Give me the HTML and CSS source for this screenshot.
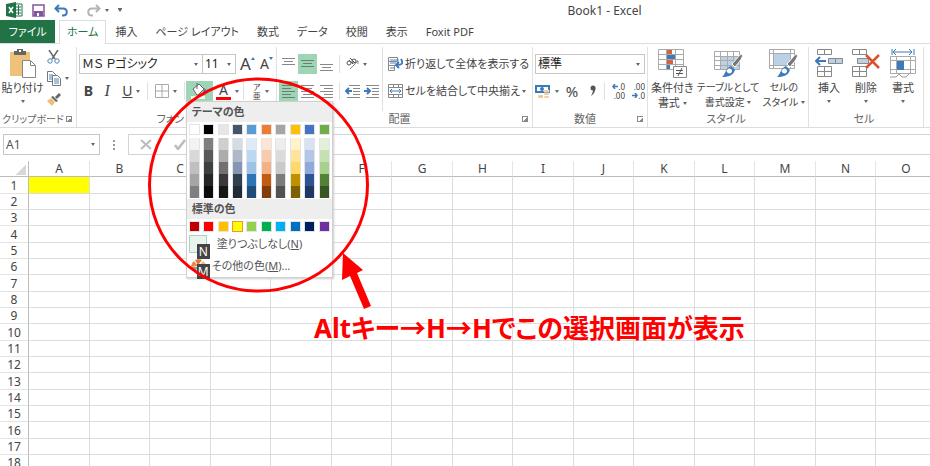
FILE: index.html
```html
<!DOCTYPE html>
<html lang="ja">
<head>
    <meta charset="UTF-8">
    <meta name="viewport" content="width=device-width, initial-scale=1.0">
    <title>Book1 - Excel</title>
    <link rel="stylesheet" href="styles.css">
    <script src="script.js" defer></script>
</head>
<body>
    <header class="titlebar">
        <div class="quick">
            <svg class="logo" width="17" height="16" viewBox="0 0 17 16">
                <path d="M9 2h7v12H9z" fill="#fff" stroke="#217346"/>
                <path d="M10 5h5M10 8h5M10 11h5M12.500 3v10" stroke="#217346"/>
                <path d="M0 2l10-2v16L0 14z" fill="#217346"/>
                <path d="M3 5l4 6M7 5l-4 6" stroke="#fff" stroke-width="1.500"/>
            </svg>
            <button aria-label="保存"><svg width="13" height="13" viewBox="0 0 13 13"><path d="M1 1h11v11H1z" fill="#fff" stroke="#8056a0" stroke-width="1.500"/><path d="M2 7h9v5H2z" fill="#8056a0"/><path d="M5 9h2v3H5z" fill="#fff"/></svg></button>
            <button class="drop" aria-label="元に戻す"><svg width="15" height="13" viewBox="0 0 15 13"><path d="M5 1L1.500 4.500L5 8M2 4.500h7c5 0 5 7 0 7H8" fill="none" stroke="#3c7ab8" stroke-width="2"/></svg></button>
            <button class="drop" aria-label="やり直し"><svg width="15" height="13" viewBox="0 0 15 13"><path d="M10 1l3.500 3.500L10 8M13 4.500H6c-5 0-5 7 0 7h1" fill="none" stroke="#b5b5b5" stroke-width="2"/></svg></button>
            <button class="drop more" aria-label="カスタマイズ"></button>
        </div>
        <h1>Book1 - Excel</h1>
    </header>

    <nav class="tabs">
        <a class="file" href="#">ファイル</a>
        <a class="active" href="#">ホーム</a>
        <a href="#">挿入</a>
        <a href="#">ページ レイアウト</a>
        <a href="#">数式</a>
        <a href="#">データ</a>
        <a href="#">校閲</a>
        <a href="#">表示</a>
        <a href="#">Foxit PDF</a>
    </nav>

    <section class="ribbon">
        <div class="group clipboard">
            <div class="group-body">
                <button class="big">
                    <svg width="27" height="29" viewBox="0 0 27 29">
                        <path d="M1 3h20v24H1z" fill="#eec27b"/>
                        <path d="M5 2h3V0h6v2h3v4H5z" fill="#666"/><path d="M10 1h2v2h-2z" fill="#fff"/>
                        <path d="M13.500 11.500h8l5 5v12h-13z" fill="#fff" stroke="#888"/><path d="M21.500 11.500v5h5" fill="none" stroke="#888"/>
                    </svg>
                    <span>貼り付け</span>
                    <i class="arrow"></i>
                </button>
                <div class="stack">
                    <button aria-label="切り取り"><svg width="13" height="14" viewBox="0 0 13 14"><path d="M2 0l6 9M11 0L5 9" stroke="#666" stroke-width="1.500"/><circle cx="3" cy="11" r="2.200" fill="none" stroke="#4a86c0"/><circle cx="10" cy="11" r="2.200" fill="none" stroke="#4a86c0"/></svg></button>
                    <button class="drop" aria-label="コピー"><svg width="14" height="15" viewBox="0 0 14 15"><path d="M.5.5h5l3 3v7h-8z" fill="#fff" stroke="#777"/><path d="M2 4h4M2 6h4M2 8h3" stroke="#4a86c0"/><path d="M5.500 4.500h5l3 3v7h-8z" fill="#fff" stroke="#777"/><path d="M7 8h5M7 10h5M7 12h5" stroke="#4a86c0"/></svg></button>
                    <button aria-label="書式のコピー"><svg width="14" height="13" viewBox="0 0 14 13"><path d="M8 4l4-4 2 2-4 4z" fill="#666"/><path d="M6 3l5 5-2 1-5-5z" fill="#666"/><path d="M4 5l4 4-3 4-5-5z" fill="#efbf75"/></svg></button>
                </div>
            </div>
            <div class="group-name"><span>クリップボード</span><button class="launch" aria-label="クリップボードの設定"></button></div>
        </div>

        <div class="group font">
            <div class="group-body rows">
                <div class="row">
                    <label class="select face"><select aria-label="フォント"><option>ＭＳ Ｐゴシック</option></select></label>
                    <label class="select size"><select aria-label="フォント サイズ"><option>11</option></select></label>
                    <button class="letter grow" aria-label="フォント サイズの拡大">A<i class="up"></i></button>
                    <button class="letter shrink" aria-label="フォント サイズの縮小">A<i class="down"></i></button>
                </div>
                <div class="row">
                    <button class="letter"><b>B</b></button>
                    <button class="letter"><em>I</em></button>
                    <button class="letter drop"><u>U</u></button>
                    <hr>
                    <button class="drop" aria-label="罫線"><svg width="14" height="14" viewBox="0 0 14 14"><path d="M.5.5h13v13H.5zM7 0v14M0 7h14" fill="none" stroke="#aaa"/></svg></button>
                    <hr>
                    <div class="fill">
                        <button class="on" aria-label="塗りつぶしの色"><svg width="21" height="18" viewBox="0 0 21 18"><path d="M4 7l6-5 5 5-6 6H8z" fill="#fff" stroke="#666"/><path d="M8 1v6" stroke="#666"/><path d="M15 6c3 1 2 5 1 7-2-2-2-5-1-7z" fill="#4a86c0"/><path d="M2 14h14v3H2z" fill="#f4f6ec"/></svg></button>
                        <div class="menu">
                            <h2>テーマの色</h2>
                            <div class="swatches theme"></div>
                            <div class="swatches tints"></div>
                            <h2>標準の色</h2>
                            <div class="swatches standard"></div>
                            <button class="item nofill"><span class="empty"></span><span>塗りつぶしなし(<u>N</u>)</span><kbd>N</kbd></button>
                            <button class="item others"><svg width="16" height="14" viewBox="0 0 16 14"><path d="M7 7L0 8a7 7 0 0 1 3-6z" fill="#e88a43"/><path d="M7 6L4 1a8 8 0 0 1 7 0z" fill="#d9763a"/><path d="M8 7l4-5a7 7 0 0 1 3 6z" fill="#f0b882"/><path d="M7 8H0a7 7 0 0 0 4 5z" fill="#999"/><path d="M8 8h7a7 7 0 0 1-5 6z" fill="#5a8cba"/></svg><span>その他の色(<u>M</u>)...</span><kbd>M</kbd></button>
                        </div>
                    </div>
                    <button class="letter color drop" aria-label="フォントの色"><span>A</span></button>
                    <hr>
                    <button class="ruby drop" aria-label="ふりがな"><span>ア<br>亜</span></button>
                </div>
            </div>
            <div class="group-name"><span>フォント</span></div>
        </div>

        <div class="group align">
            <div class="group-body">
                <div class="rows tools">
                    <div class="row">
                        <button aria-label="上揃え"><svg width="13" height="14" viewBox="0 0 13 14"><path d="M0 1.500h13M2 4.500h9M0 7.500h13" stroke="#888"/></svg></button>
                        <button class="on" aria-label="上下中央揃え"><svg width="13" height="14" viewBox="0 0 13 14"><path d="M0 3.500h13M2 6.500h9M0 9.500h13" stroke="#69806f"/></svg></button>
                        <button aria-label="下揃え"><svg width="13" height="14" viewBox="0 0 13 14"><path d="M0 7.500h13M2 10.500h9M0 13.500h13" stroke="#888"/></svg></button>
                        <hr>
                        <button class="drop orient" aria-label="方向"><svg width="13" height="14" viewBox="0 0 13 14"><circle cx="3" cy="6" r="2" fill="none" stroke="#555"/><path d="M3 3l4 4M4 1l5 5" stroke="#555"/><circle cx="8" cy="4" r="2" fill="none" stroke="#555"/><path d="M4 12l8-8M12 7V4H9" fill="none" stroke="#888"/></svg></button>
                    </div>
                    <div class="row">
                        <button class="on" aria-label="左揃え"><svg width="13" height="14" viewBox="0 0 13 14"><path d="M0 1.500h13M0 4.500h9M0 7.500h13M0 10.500h9M0 13.500h13" stroke="#69806f"/></svg></button>
                        <button aria-label="中央揃え"><svg width="13" height="14" viewBox="0 0 13 14"><path d="M0 1.500h13M2 4.500h9M0 7.500h13M2 10.500h9M0 13.500h13" stroke="#888"/></svg></button>
                        <button aria-label="右揃え"><svg width="13" height="14" viewBox="0 0 13 14"><path d="M0 1.500h13M4 4.500h9M0 7.500h13M4 10.500h9M0 13.500h13" stroke="#888"/></svg></button>
                        <hr>
                        <button aria-label="インデントを減らす"><svg width="15" height="14" viewBox="0 0 15 14"><path d="M4 1.500h11M8 4.500h7M8 7.500h7M8 10.500h7M2 13.500h13" stroke="#888"/><path d="M4 4L1 7l3 3M1 7h6" fill="none" stroke="#3c7ab8" stroke-width="2"/></svg></button>
                        <button aria-label="インデントを増やす"><svg width="15" height="14" viewBox="0 0 15 14"><path d="M2 1.500h13M8 4.500h7M8 7.500h7M8 10.500h7M2 13.500h13" stroke="#888"/><path d="M3 4l3 3-3 3M0 7h6" fill="none" stroke="#3c7ab8" stroke-width="2"/></svg></button>
                    </div>
                </div>
                <div class="rows wide">
                    <button class="text"><svg width="15" height="15" viewBox="0 0 15 15"><path d="M.5.500h9v4h-9zM.5 4.500h9v4h-9zM.5 8.500h6v5h-6z" fill="#fff" stroke="#888"/><path d="M2 3h9M2 6h6M2 11h4" stroke="#4a86c0"/><path d="M13 2c3 5 0 6-4 6M11 5L8 8l3 3" fill="none" stroke="#3c7ab8" stroke-width="2"/></svg><span>折り返して全体を表示する</span></button>
                    <button class="text drop"><svg width="15" height="14" viewBox="0 0 15 14"><path d="M.5.5h14v13H.5zM0 3.500h15M0 10.500h15M5.500 0v3M10.500 0v3M5.500 11v3M10.500 11v3" fill="none" stroke="#888"/><path d="M2 7h11M4 5L2 7l2 2M11 5l2 2-2 2" fill="none" stroke="#3c7ab8"/></svg><span>セルを結合して中央揃え</span></button>
                </div>
            </div>
            <div class="group-name"><span>配置</span><button class="launch" aria-label="配置の設定"></button></div>
        </div>

        <div class="group number">
            <div class="group-body rows">
                <label class="select format"><select aria-label="表示形式"><option>標準</option></select></label>
                <div class="row">
                    <button class="drop" aria-label="通貨表示形式"><svg width="16" height="15" viewBox="0 0 16 15"><path d="M0 1h15v8H0z" fill="#3c7ab8"/><path d="M2 3h11v4H2z" fill="#fff"/><circle cx="7" cy="5" r="2" fill="#3c7ab8"/><path d="M9 6h5v2H9zM9 9h5v2H9zM9 12h5v2H9zM3 11h5v3H3z" fill="#efc079" stroke="#fff" stroke-width=".5"/></svg></button>
                    <button class="percent">%</button>
                    <button aria-label="桁区切り"><svg width="9" height="12" viewBox="0 0 9 12"><circle cx="4" cy="3" r="2.500" fill="#555"/><path d="M6 2c1 4-1 7-4 9 1-2 2-4 2-6z" fill="#555"/></svg></button>
                    <hr>
                    <button class="digits" aria-label="小数点以下の表示桁数を増やす"><span><svg width="6" height="5" viewBox="0 0 6 5"><path d="M3 0L1 2.500l2 2.500M1 2.500h5" fill="none" stroke="#3c7ab8" stroke-width="1.500"/></svg>.0</span><span>.00</span></button>
                    <button class="digits" aria-label="小数点以下の表示桁数を減らす"><span>.00</span><span><svg width="6" height="5" viewBox="0 0 6 5"><path d="M3 0l2 2.500L3 5M0 2.500h5" fill="none" stroke="#3c7ab8" stroke-width="1.500"/></svg>.0</span></button>
                </div>
            </div>
            <div class="group-name"><span>数値</span><button class="launch" aria-label="数値の設定"></button></div>
        </div>

        <div class="group styles">
            <div class="group-body">
                <button class="big">
                    <svg width="29" height="29" viewBox="0 0 29 29"><path d="M.5.5h25v20H.5zM0 5.500h26M0 10.500h26M0 15.500h26M8.500 0v20M17.500 0v20" fill="#fff" stroke="#aaa"/><path d="M9 1h5v4H9zM9 11h6v4H9z" fill="#d8613f"/><path d="M9 6h8v4H9zM9 16h3v4H9z" fill="#3c7ab8"/><path d="M15.500 17.500h13v11h-13z" fill="#fff" stroke="#888"/><path d="M18 21.500h7M18 24.500h7M24 19l-4 8" stroke="#555"/></svg>
                    <span>条件付き</span><span>書式 <i class="arrow"></i></span>
                </button>
                <button class="big dense">
                    <svg width="29" height="29" viewBox="0 0 29 29"><path d="M.5 2.500h25v18H.5z" fill="#fff"/><path d="M7 8h19v13H7z" fill="#bcd0e6"/><path d="M.5 2.500h25v18H.5zM0 7.500h26M0 11.500h26M0 16.500h26M6.500 2v19M13.500 2v19M19.500 2v19" fill="none" stroke="#aaa"/><path d="M28 5c2 3-3 8-7 13l-3-3C22 11 25 6 28 5z" fill="#777" stroke="#fff"/><path d="M17 17l4 4c-2 6-7 7-13 7 4-3 3-9 9-11z" fill="#3c7ab8"/><path d="M14 20c2-1 4 0 4 2s-2 3-4 2-2-3 0-4z" fill="#fff"/></svg>
                    <span>テーブルとして</span><span>書式設定 <i class="arrow"></i></span>
                </button>
                <button class="big dense">
                    <svg width="29" height="29" viewBox="0 0 29 29"><path d="M.5.5h25v19H.5zM0 4.500h26M0 16.500h26M4.500 0v20M21.500 0v20" fill="#fff" stroke="#aaa"/><path d="M5 5h16v11H5z" fill="#bcd0e6"/><path d="M28 5c2 3-3 8-7 13l-3-3C22 11 25 6 28 5z" fill="#777" stroke="#fff"/><path d="M17 17l4 4c-2 6-7 7-13 7 4-3 3-9 9-11z" fill="#3c7ab8"/><path d="M14 20c2-1 4 0 4 2s-2 3-4 2-2-3 0-4z" fill="#fff"/></svg>
                    <span>セルの</span><span>スタイル <i class="arrow"></i></span>
                </button>
            </div>
            <div class="group-name"><span>スタイル</span></div>
        </div>

        <div class="group cells">
            <div class="group-body">
                <button class="big">
                    <svg width="28" height="29" viewBox="0 0 28 29"><path d="M2.500.5h14v5h-14zM9.500 0v6M2.500 17.500h14v10h-14zM9.500 17v11M2 22.500h15" fill="#fff" stroke="#888"/><path d="M13.500 9.500h14v5h-14zM20.500 9v6" fill="#bcd0e6" stroke="#888"/><path d="M5 8l-4 4 4 4M1 12h10" fill="none" stroke="#3c7ab8" stroke-width="2"/></svg>
                    <span>挿入</span><i class="arrow"></i>
                </button>
                <button class="big">
                    <svg width="28" height="29" viewBox="0 0 28 29"><path d="M.5.5h14v5H.5zM7.500 0v6M.5 17.500h14v10H.5zM7.500 17v11M0 22.500h15" fill="#fff" stroke="#888"/><path d="M5.500 9.500h11v5h-11z" fill="#bcd0e6" stroke="#888"/><path d="M14 6l13 13M27 6L14 19" stroke="#d8532f" stroke-width="2.500"/></svg>
                    <span>削除</span><i class="arrow"></i>
                </button>
                <button class="big">
                    <svg width="28" height="29" viewBox="0 0 28 29"><path d="M3 0v6M25 0v6M4 3h19M7 0L4 3l3 3M20 0l3 3-3 3" fill="none" stroke="#3c7ab8"/><path d="M1.500 7.500h25v17h-25zM1 11.500h26M1 20.500h26M7.500 7v18M21.500 7v18" fill="#fff" stroke="#aaa"/><path d="M8 12h7v9H8z" fill="#3c7ab8"/><path d="M1 28h6l3-3 3 3h4l3-3" fill="none" stroke="#999"/></svg>
                    <span>書式</span><i class="arrow"></i>
                </button>
            </div>
            <div class="group-name"><span>セル</span></div>
        </div>
    </section>

    <section class="formula">
        <label class="select name"><input value="A1" aria-label="名前ボックス"></label>
        <span class="dots"><i></i><i></i><i></i></span>
        <div class="entry">
            <button aria-label="キャンセル"><svg width="12" height="11" viewBox="0 0 12 11"><path d="M1 1l10 9M11 1L1 10" stroke="#bbb" stroke-width="2"/></svg></button>
            <button aria-label="入力"><svg width="12" height="11" viewBox="0 0 12 11"><path d="M1 6l3 4 7-9" fill="none" stroke="#bbb" stroke-width="2.500"/></svg></button>
            <input aria-label="数式バー">
        </div>
    </section>

    <main class="sheet">
        <table>
            <thead><tr><th class="corner"></th></tr></thead>
            <tbody></tbody>
        </table>
    </main>

    <svg class="marks" width="400" height="320" viewBox="0 0 400 320">
        <ellipse cx="258.500" cy="185" rx="109" ry="106" fill="none" stroke="#f00" stroke-width="3"/>
        <path d="M343 253l20 17-6 3 14 33-7 3-14-33-8 4z" fill="#f00"/>
    </svg>
    <p class="note">Altキー→H→Hでこの選択画面が表示</p>
</body>
</html>
```
FILE: styles.css
```css
* {
    box-sizing: border-box;
    margin: 0;
    padding: 0;
}
body {
    position: relative;
    height: 100vh;
    overflow: hidden;
    display: flex;
    flex-direction: column;
    background: #fff;
    color: #444;
    font-family: "Noto Sans", "Noto Sans CJK JP", sans-serif;
    font-size: 12px;
    line-height: 16px;
    font-feature-settings: "palt";
}
button, input, select {
    font: inherit;
    font-feature-settings: inherit;
    color: inherit;
    border: 0;
    background: none;
}
svg {
    display: block;
    flex: none;
}
hr {
    width: 1px;
    height: 18px;
    border: 0;
    background: #e1e1e1;
}

/* title bar */
.titlebar {
    display: grid;
    grid-template-columns: 30% 1fr;
    align-items: center;
    height: 20px;
    flex: none;
}
.titlebar h1 {
    padding-top: 2px;
    font-size: 12px;
    font-weight: normal;
    text-align: center;
}
.quick {
    display: flex;
    align-items: center;
    gap: 9px;
    padding-left: 6px;
}
.quick .more {
    border-top: 1px solid #666;
}

/* small triangle used by every drop-down */
.arrow, .drop::after, .select::after {
    content: "";
    display: inline-block;
    flex: none;
    border: 2px solid transparent;
    border-top: 3px solid #666;
    border-bottom: 0;
}
.drop {
    display: flex;
    align-items: center;
    gap: 4px;
}

/* tabs */
.tabs {
    display: flex;
    flex: none;
    height: 24px;
    border-bottom: 1px solid #ddd;
    font-size: 11px;
}
.tabs a {
    padding: 4px 9px 0;
    color: #444;
    text-decoration: none;
    white-space: nowrap;
}
.tabs .file {
    width: 55px;
    margin-right: 4px;
    padding: 4px 0 0;
    text-align: center;
    background: #217346;
    color: #fff;
}
.tabs .active {
    height: 24px;
    padding: 3px 7px 0;
    border: 1px solid #ddd;
    border-bottom: 0;
    background: #fff;
    color: #217346;
}

/* ribbon */
.ribbon {
    display: flex;
    flex: none;
    height: 84px;
    border-bottom: 1px solid #ddd;
}
.group {
    display: flex;
    flex-direction: column;
    flex: none;
    margin: 3px 0 0;
    border-right: 1px solid #e1e1e1;
}
.group-body {
    display: flex;
    flex: 1;
}
.group-name {
    display: flex;
    align-items: center;
    height: 16px;
    padding-right: 4px;
    font-size: 11px;
    color: #666;
}
.group-name span {
    flex: 1;
    text-align: center;
    white-space: nowrap;
}
.launch {
    width: 6px;
    height: 6px;
    border-top: 1px solid #888;
    border-left: 1px solid #888;
    background: linear-gradient(135deg, transparent 50%, #888 50%);
}
.rows {
    display: flex;
    flex-direction: column;
    gap: 7px;
    padding-top: 7px;
}
.row {
    display: flex;
    align-items: center;
    height: 20px;
}
.row button {
    display: flex;
    align-items: center;
    justify-content: center;
    height: 20px;
}
.on {
    background: #9fd5b7;
}
.select {
    position: relative;
    display: flex;
    height: 20px;
    border: 1px solid #c6c6c6;
}
.select::after {
    position: absolute;
    right: 4px;
    top: 8px;
}
.select select, .select input {
    width: 100%;
    padding-left: 2px;
    appearance: none;
    color: #222;
}
.big {
    display: flex;
    flex-direction: column;
    align-items: center;
    padding-top: 2px;
    font-size: 11px;
    line-height: 15px;
    white-space: nowrap;
}
.dense {
    font-size: 10px;
}
.big svg {
    margin-bottom: 2px;
}
.big > .arrow {
    margin-top: 5px;
}
.big span .arrow {
    margin-bottom: 2px;
}

.clipboard {
    width: 77px;
}
.clipboard .big {
    width: 45px;
}
.clipboard .group-name {
    font-size: 10px;
}
.stack {
    display: flex;
    flex-direction: column;
    gap: 7px;
    padding: 3px 0 0 2px;
}

.font {
    width: 200px;
}
.font .rows {
    padding-left: 2px;
}
.face {
    width: 124px;
}
.size {
    width: 34px;
    margin-left: -1px;
}
.letter {
    width: 19px;
    font-size: 14px;
}
.grow {
    margin-left: 2px;
    font-size: 17px;
}
.letter i {
    align-self: flex-start;
    margin-top: 3px;
    border: 2px solid transparent;
}
.letter .up {
    border-bottom: 3px solid #3c7ab8;
    border-top: 0;
}
.letter .down {
    border-top: 3px solid #3c7ab8;
    border-bottom: 0;
}
.letter em {
    font-family: "Liberation Serif", serif;
    font-size: 16px;
}
.letter.drop {
    width: 30px;
}
.font .row > [aria-label="罫線"] {
    width: 34px;
}
.fill {
    position: relative;
}
.fill > button {
    width: 27px;
}
.color span {
    line-height: 15px;
    border-bottom: 3px solid #f00;
    padding: 0 3px;
}
.ruby {
    width: 31px;
    font-size: 8px;
    line-height: 9px;
}
.font hr {
    margin: 0 1px;
}

.align {
    width: 256px;
}
.align .rows {
    padding-left: 2px;
}
.tools .row button {
    width: 19px;
}
.tools hr {
    margin: 0 3px;
}
.tools .row .orient {
    width: 26px;
}
.align .wide {
    margin-left: 1px;
    border-left: 1px solid #e1e1e1;
    padding-left: 5px;
}
.text {
    display: flex;
    align-items: center;
    gap: 2px;
    height: 20px;
    white-space: nowrap;
    font-size: 11px;
}

.number {
    width: 115px;
}
.number .rows {
    padding-left: 2px;
}
.format {
    width: 110px;
}
.number .row {
    gap: 3px;
}
.percent {
    width: 20px;
    font-size: 15px;
}
.number [aria-label="桁区切り"] {
    width: 16px;
}
.row .digits {
    flex-direction: column;
    align-items: flex-end;
    width: 17px;
    font-size: 8px;
    line-height: 9px;
}
.digits span {
    display: flex;
    align-items: center;
}

.styles {
    width: 161px;
}
.styles .group-body {
    justify-content: space-between;
    padding: 0 3px;
}
.cells {
    width: 115px;
}
.cells .group-body {
    justify-content: space-between;
    padding: 0 6px;
}

/* colour menu */
.menu {
    position: absolute;
    top: 20px;
    left: 0;
    z-index: 1;
    width: 147px;
    border: 1px solid #d0d0d0;
    background: #fff;
    box-shadow: 1px 1px 2px #ccc;
    color: #555;
    font-size: 11px;
}
.menu h2 {
    height: 20px;
    padding-left: 5px;
    background: #eee;
    font-size: 11px;
    line-height: 20px;
}
.swatches {
    display: grid;
    grid-template-columns: repeat(10, 11px);
    justify-content: space-between;
    padding: 2px;
}
.menu .swatches button {
    height: 11px;
    border: 1px solid #e2e4e7;
}
.menu .tints {
    padding: 1px 2px;
}
.menu .tints button {
    height: 12px;
    border-width: 0 1px;
}
.menu .standard .picked {
    border-color: #f29436;
}
.menu .item {
    position: relative;
    justify-content: flex-start;
    width: 100%;
    height: 20px;
    padding-left: 2px;
    gap: 10px;
}
.menu .others {
    height: 23px;
    gap: 5px;
    padding-left: 4px;
}
.item span {
    white-space: nowrap;
}
.empty {
    width: 18px;
    height: 18px;
    border: 1px solid #a8d5ba;
    background: #eaf4ee;
}
kbd {
    position: absolute;
    left: 10px;
    top: 10px;
    width: 13px;
    height: 15px;
    background: #444;
    color: #fff;
    font: 12px/15px "Noto Sans", sans-serif;
    text-align: center;
}

/* formula bar */
.formula {
    display: flex;
    flex: none;
    height: 33px;
    padding: 6px 0 6px 3px;
}
.formula .name {
    width: 97px;
    height: 21px;
}
.formula .name input {
    color: #555;
}
.dots {
    display: flex;
    flex-direction: column;
    justify-content: center;
    gap: 2px;
    width: 28px;
    padding-left: 13px;
}
.dots i {
    width: 2px;
    height: 2px;
    background: #999;
}
.entry {
    display: flex;
    flex: 1;
    gap: 22px;
    padding-left: 11px;
    border: 1px solid #d4d4d4;
    border-right: 0;
}
.entry input {
    flex: 1;
}

/* sheet */
.sheet {
    flex: 1;
    overflow: hidden;
}
table {
    width: 100%;
    table-layout: fixed;
    border-collapse: separate;
    border-spacing: 0;
}
th {
    font-weight: normal;
    line-height: 15px;
}
thead th {
    width: 60px;
    height: 16px;
    border-bottom: 1px solid #bbb;
    border-right: 1px solid #e4e4e4;
}
thead th:nth-child(even) {
    width: 61px;
}
thead .corner:first-child {
    width: 29px;
    border-right-color: #bbb;
    background: linear-gradient(135deg, transparent 50%, #d8d8d8 50%) 15px 3px / 11px 11px no-repeat;
}
tbody th {
    border-right: 1px solid #bbb;
    border-bottom: 1px solid #e4e4e4;
}
tbody tr {
    height: 16px;
}
tbody tr:nth-child(3n+1) {
    height: 17px;
}
td {
    border-right: 1px solid #dcdcdc;
    border-bottom: 1px solid #dcdcdc;
}
.yellow {
    background: #ff0;
}

/* red marks on top of the window */
.marks {
    position: absolute;
    left: 0;
    top: 0;
    z-index: 2;
    pointer-events: none;
}
.note {
    position: absolute;
    left: 314px;
    top: 312px;
    color: #f00;
    font-size: 26px;
    font-weight: bold;
    line-height: 32px;
    white-space: nowrap;
}
```
FILE: script.js
```javascript
const theme = ["#fff", "#000", "#e7e6e6", "#44546a", "#5b9bd5", "#ed7d31", "#a5a5a5", "#ffc000", "#4472c4", "#70ad47"];
const tints = [
    ["#f2f2f2", "#7f7f7f", "#d0cece", "#d6dce4", "#deebf6", "#fbe5d5", "#ededed", "#fff2cc", "#d9e2f3", "#e2efd9"],
    ["#d8d8d8", "#595959", "#aeabab", "#adb9ca", "#bdd7ee", "#f7cbac", "#dbdbdb", "#fee599", "#b4c6e7", "#c5e0b3"],
    ["#bfbfbf", "#3f3f3f", "#757070", "#8496b0", "#9cc3e5", "#f4b183", "#c9c9c9", "#ffd965", "#8eaadb", "#a8d08d"],
    ["#a5a5a5", "#262626", "#3a3838", "#323f4f", "#2e75b5", "#c55a11", "#7b7b7b", "#bf9000", "#2f5496", "#538135"],
    ["#7f7f7f", "#0c0c0c", "#171616", "#222a35", "#1e4e79", "#833c0b", "#525252", "#7f6000", "#1f3864", "#375623"]
];
const standard = ["#c00000", "#ff0000", "#ffc000", "#ffff00", "#92d050", "#00b050", "#00b0f0", "#0070c0", "#002060", "#7030a0"];

function addSwatches(selector, colors) {
    const box = document.querySelector(selector);
    for (const color of colors) {
        const button = document.createElement("button");
        button.style.background = color;
        button.setAttribute("aria-label", color);
        if (color === "#ffff00") button.className = "picked";
        box.appendChild(button);
    }
}
addSwatches(".theme", theme);
addSwatches(".tints", tints.flat());
addSwatches(".standard", standard);

const columns = "ABCDEFGHIJKLMNO";
const head = document.querySelector("thead tr");
for (const letter of columns) {
    const th = document.createElement("th");
    th.textContent = letter;
    head.appendChild(th);
}
const body = document.querySelector("tbody");
for (let i = 1; i <= 18; i++) {
    const tr = body.insertRow();
    const th = document.createElement("th");
    th.textContent = i;
    tr.appendChild(th);
    for (const letter of columns) {
        const td = tr.insertCell();
        if (i === 1 && letter === "A") td.className = "yellow";
    }
}
```
